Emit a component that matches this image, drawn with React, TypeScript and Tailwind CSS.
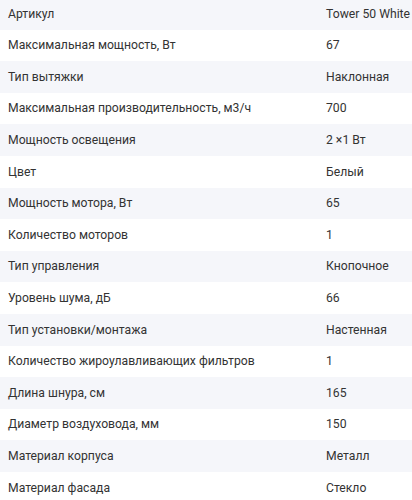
import React from "react";

const rows: [string, string][] = [
  ["Артикул", "Tower 50 White"],
  ["Максимальная мощность, Вт", "67"],
  ["Тип вытяжки", "Наклонная"],
  ["Максимальная производительность, м3/ч", "700"],
  ["Мощность освещения", "2 ×1 Вт"],
  ["Цвет", "Белый"],
  ["Мощность мотора, Вт", "65"],
  ["Количество моторов", "1"],
  ["Тип управления", "Кнопочное"],
  ["Уровень шума, дБ", "66"],
  ["Тип установки/монтажа", "Настенная"],
  ["Количество жироулавливающих фильтров", "1"],
  ["Длина шнура, см", "165"],
  ["Диаметр воздуховода, мм", "150"],
  ["Материал корпуса", "Металл"],
  ["Материал фасада", "Стекло"],
];

export default function App() {
  return (
    <div className="w-[412px] h-[500px] overflow-hidden bg-white text-[#333333] font-['Roboto',sans-serif] text-[12.2px]">
      <div className="-mt-[2px] flex flex-col">
        {rows.map(([k, v], i) => (
          <div
            key={k}
            className={`flex items-center h-[31.6px] ${i % 2 === 0 ? "bg-[#f5f6fa]" : "bg-white"}`}
          >
            <div className="flex-1 pl-[8px] whitespace-nowrap">{k}</div>
            <div className="w-[86px] shrink-0 whitespace-nowrap">{v}</div>
          </div>
        ))}
      </div>
    </div>
  );
}
